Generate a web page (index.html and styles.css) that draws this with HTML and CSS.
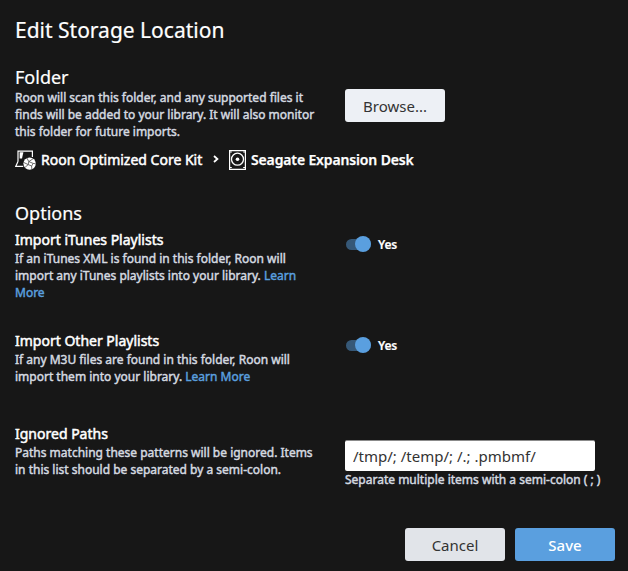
FILE: index.html
```html
<!DOCTYPE html>
<html lang="en">
<head>
<meta charset="utf-8">
<title>Edit Storage Location</title>
<link rel="stylesheet" href="styles.css">
</head>
<body>
<main class="dialog">
  <h1 class="title">Edit Storage Location</h1>
  <section class="row folder">
    <div class="info">
      <h2 class="section-title">Folder</h2>
      <p class="desc">Roon will scan this folder, and any supported files it<br>finds will be added to your library. It will also monitor<br>this folder for future imports.</p>
    </div>
    <button class="button browse">Browse...</button>
  </section>
  <nav class="path">
    <svg class="core-icon" width="21" height="21" viewBox="0 0 21 21" fill="none">
      <path d="M3 11.5V1.1h14.4v5.8M3 11.5.8 16.3h7.4" stroke="#fff" stroke-width="1.2"/>
      <path d="M4.6 2.2h3.8L7 8.5H4.6z" fill="#fff"/>
      <circle cx="14.6" cy="13.6" r="6.2" fill="#fff"/>
      <path d="m11.8 7.8 2 3.8 4.2-2.8M13.8 11.6l-.6 3 3.4 1.4 1.6-2.6zM18.2 13.4l2.6.4M16.6 16l.2 3.6M13.2 14.6l-3.2 2.8M8.6 12.4l4.6 2.2" stroke="#333" stroke-width=".7"/>
    </svg>
    <span class="core-name">Roon Optimized Core Kit</span>
    <svg class="chevron" width="6" height="8" viewBox="0 0 6 8" fill="none"><path d="m1 1 3.4 3L1 7" stroke="#fff" stroke-width="1.8"/></svg>
    <svg class="disk-icon" width="17" height="20" viewBox="0 0 17 20" fill="none">
      <path d="M.6.6h15.8v18.8H.6z" stroke="#fff" stroke-width="1.2"/>
      <circle cx="8.5" cy="9.2" r="6" stroke="#fff" stroke-width="1.3"/>
      <circle cx="8.5" cy="9.2" r="1.8" fill="#fff"/>
      <path d="M1 2h1.8M14.2 2H16M1 17.5h1.8M14.2 17.5H16" stroke="#fff"/>
    </svg>
    <span class="disk-name">Seagate Expansion Desk</span>
  </nav>
  <h2 class="section-title options-title">Options</h2>
  <section class="row itunes">
    <div class="info">
      <h3 class="label">Import iTunes Playlists</h3>
      <p class="desc">If an iTunes XML is found in this folder, Roon will<br>import any iTunes playlists into your library. <a class="link">Learn<br>More</a></p>
    </div>
    <div class="switch"><span class="track"><span class="knob"></span></span><span class="state">Yes</span></div>
  </section>
  <section class="row other">
    <div class="info">
      <h3 class="label">Import Other Playlists</h3>
      <p class="desc">If any M3U files are found in this folder, Roon will<br>import them into your library. <a class="link">Learn More</a></p>
    </div>
    <div class="switch"><span class="track"><span class="knob"></span></span><span class="state">Yes</span></div>
  </section>
  <section class="row ignored">
    <div class="info">
      <h3 class="label">Ignored Paths</h3>
      <p class="desc">Paths matching these patterns will be ignored. Items<br>in this list should be separated by a semi-colon.</p>
    </div>
    <div class="field">
      <input class="input" type="text" value="/tmp/; /temp/; /.; .pmbmf/" aria-label="Ignored Paths">
      <p class="desc hint">Separate multiple items with a semi-colon ( ; )</p>
    </div>
  </section>
  <footer class="actions">
    <button class="button cancel">Cancel</button>
    <button class="button save">Save</button>
  </footer>
</main>
</body>
</html>
```
FILE: styles.css
```css
* { box-sizing: border-box; }
body {
  margin: 0;
  background: #171717;
  color: #fff;
  font-family: "Noto Sans", sans-serif;
}
h1, h2, h3, p { margin: 0; white-space: nowrap; }
.dialog { height: 571px; padding: 15px 13px 0 15px; overflow: hidden; }
.title { font-size: 21px; line-height: 30px; font-weight: 400; -webkit-text-stroke: .2px; }
.row { display: grid; grid-template-columns: 330px 1fr; align-items: start; }
.folder { height: 82px; margin-top: 20px; }
.section-title { font-size: 18px; line-height: 24px; font-weight: 400; -webkit-text-stroke: .2px; }
.desc { font-size: 12px; line-height: 17px; font-weight: 400; -webkit-text-stroke: .45px; color: #d5dae0; }
.button {
  width: 100px;
  height: 33px;
  padding: 0;
  border: 0;
  border-radius: 3px;
  font: 400 15px/22px "Noto Sans", sans-serif;
  color: #333;
}
.browse { margin-top: 24px; background: #edf0f5; }
.path { display: flex; align-items: center; height: 24px; font-size: 14px; font-weight: 400; white-space: nowrap; -webkit-text-stroke: .5px; }
.core-icon { margin: 2px 5px 0 0; }
.core-name { width: 162px; }
.chevron { margin: 0 10px; }
.disk-icon { margin-top: 2px; }
.disk-name { margin-left: 5px; font-weight: 600; letter-spacing: -.14px; -webkit-text-stroke: .25px; }
.options-title { margin-top: 30px; }
.label { font-size: 14px; line-height: 20px; font-weight: 400; -webkit-text-stroke: .5px; }
.itunes { margin-top: 5px; height: 101px; }
.other { height: 93px; }
.ignored { height: 104px; }
.link { color: #5a9fdf; }
.switch { display: flex; align-items: center; height: 16px; padding-left: 1px; margin-top: 6px; }
.track { display: flex; align-items: center; justify-content: flex-end; width: 25px; height: 11px; border-radius: 6px; background: #365877; }
.knob { flex: none; width: 16px; height: 16px; border-radius: 50%; background: #5a9fdf; }
.state { margin-left: 7px; padding-top: 2px; font-size: 12px; line-height: 16px; font-weight: 600; letter-spacing: -.2px; -webkit-text-stroke: .2px; }
.field { padding-top: 16px; }
.input {
  display: block;
  width: 250px;
  height: 31px;
  padding: 0 8px 1px;
  border: 1px solid #8b8b8b;
  border-width: 1px 0 0;
  border-radius: 2px;
  background: #fff;
  color: #333;
  font: 400 15px/22px "Noto Sans", sans-serif;
}
.hint { margin-top: 0; }
.actions { display: flex; justify-content: flex-end; gap: 10px; }
.cancel { background: #e1e4e9; }
.save { background: #5a9fdf; color: #fff; font-weight: 500; }
```
